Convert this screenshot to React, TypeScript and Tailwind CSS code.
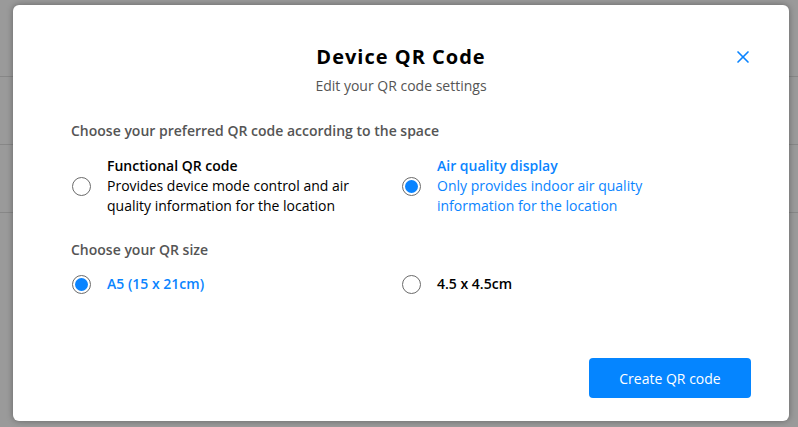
import { X } from "lucide-react";

const font = { fontFamily: '"Open Sans", "Noto Sans", sans-serif' };

type RadioProps = { checked?: boolean };

const Radio = ({ checked }: RadioProps) => (
  <span className="flex h-[19px] w-[19px] shrink-0 items-center justify-center rounded-full border border-[#6b6b6b] bg-white">
    {checked && <span className="h-[13px] w-[13px] rounded-full bg-[#0a84ff]" />}
  </span>
);

export default function App() {
  return (
    <div
      className="relative h-[427px] w-[798px] overflow-hidden bg-[#9a9a9a]"
      style={font}
    >
      {/* page behind the backdrop */}
      <div className="flex flex-col">
        <div className="h-[77px] border-b border-[#878787]" />
        <div className="h-[68px] border-b border-[#878787]" />
        <div className="h-[68px] border-b border-[#878787]" />
      </div>

      <div className="absolute left-[13px] top-[5px] flex h-[416px] w-[776px] flex-col rounded-[6px] bg-white px-[58px] pt-[38px] shadow-[0_0_6px_rgba(0,0,0,0.35)]">
        <button className="absolute right-[36px] top-[42px] text-[#0a84ff]">
          <X className="h-[20px] w-[20px]" strokeWidth={2} />
        </button>

        <h2 className="text-center text-[20px] font-bold leading-[28px] tracking-[0.05em] text-black">
          Device QR Code
        </h2>
        <p className="mt-[5px] text-center text-[14px] leading-[20px] text-[#555]">
          Edit your QR code settings
        </p>

        <p className="mt-[25px] text-[14px] font-semibold leading-[20px] text-[#555]">
          Choose your preferred QR code according to the space
        </p>

        <div className="mt-[15px] grid grid-cols-2">
          <div className="flex items-center gap-[16px] pl-[1px]">
            <Radio />
            <div className="max-w-[268px] text-[14px] leading-[20px] text-black">
              <p className="font-semibold">Functional QR code</p>
              <p>Provides device mode control and air quality information for the location</p>
            </div>
          </div>
          <div className="flex items-center gap-[16px] pl-[1px]">
            <Radio checked />
            <div className="max-w-[268px] text-[14px] leading-[20px] text-[#0a84ff]">
              <p className="font-semibold">Air quality display</p>
              <p>Only provides indoor air quality information for the location</p>
            </div>
          </div>
        </div>

        <p className="mt-[24px] text-[14px] font-semibold leading-[20px] text-[#555]">
          Choose your QR size
        </p>

        <div className="mt-[14px] grid grid-cols-2">
          <div className="flex items-center gap-[16px] pl-[1px]">
            <Radio checked />
            <span className="text-[14px] font-semibold leading-[20px] text-[#0a84ff]">
              A5 (15 x 21cm)
            </span>
          </div>
          <div className="flex items-center gap-[16px] pl-[1px]">
            <Radio />
            <span className="text-[14px] font-semibold leading-[20px] text-black">
              4.5 x 4.5cm
            </span>
          </div>
        </div>

        <div className="mt-[64px] flex justify-end">
          <button className="mr-[-20px] h-[40px] w-[162px] rounded-[4px] bg-[#0585ff] text-[14px] text-white">
            Create QR code
          </button>
        </div>
      </div>
    </div>
  );
}
